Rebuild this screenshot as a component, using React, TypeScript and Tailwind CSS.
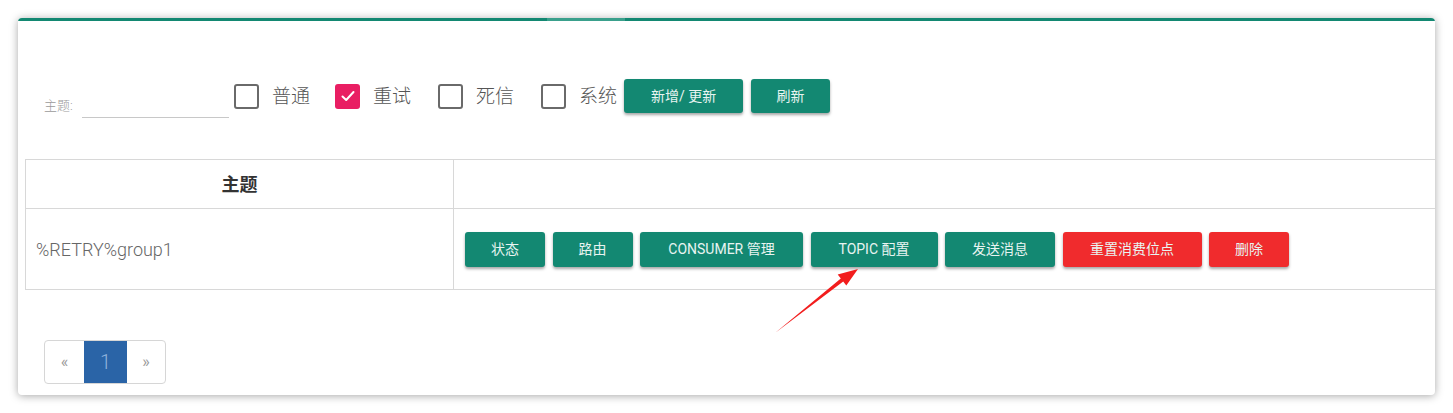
import React from "react";

const font = { fontFamily: '"Roboto", "Noto Sans CJK SC", sans-serif' };

function Check({ checked, label }: { checked?: boolean; label: string }) {
  return (
    <div className="flex items-center h-[24px] mt-[5px]">
      {checked ? (
        <div className="w-[25px] h-[25px] rounded-[3px] bg-[#e91e63] flex items-center justify-center">
          <svg width="16" height="16" viewBox="0 0 16 16">
            <path d="M2.5 8.5 L6.2 12 L13.5 4" stroke="white" strokeWidth="2" fill="none" strokeLinecap="round" strokeLinejoin="round" />
          </svg>
        </div>
      ) : (
        <div className="w-[25px] h-[25px] rounded-[3px] border-2 border-[#6a6a6a]" />
      )}
      <span className="ml-[13px] text-[19px] font-light text-[#555] leading-none">{label}</span>
    </div>
  );
}

function Btn({ children, w, red }: { children: React.ReactNode; w: string; red?: boolean }) {
  return (
    <div
      className={`${w} h-[35px] rounded-[3px] flex items-center justify-center text-[14px] text-[#e8f4f1] shadow-[0_2px_3px_rgba(0,0,0,0.35)] ${
        red ? "bg-[#f02b2d]" : "bg-[#138872]"
      }`}
    >
      {children}
    </div>
  );
}

export default function App() {
  return (
    <div className="w-[1453px] h-[413px] bg-white pt-[18px] pl-[18px] relative" style={font}>
      <div className="w-[1417px] h-[377px] bg-white rounded-[4px] overflow-hidden shadow-[0_1px_8px_rgba(0,0,0,0.35)] flex flex-col">
        <div className="flex h-[3px] shrink-0">
          <div className="w-[529px] bg-[#138872]" />
          <div className="w-[78px] bg-[#3aa08c]" />
          <div className="flex-1 bg-[#138872]" />
        </div>
        <div className="flex items-start pl-[26px] pt-[58px]">
          <div className="flex items-end h-[39px]">
            <span className="text-[13px] text-[#9a9a9a] font-light mb-[3px] w-[38px]">主题:</span>
            <div className="w-[147px] h-full border-b border-[#c8c8c8]" />
          </div>
          <div className="flex items-start ml-[5px]">
            <Check label="普通" />
            <div className="w-[25px]" />
            <Check checked label="重试" />
            <div className="w-[27px]" />
            <Check label="死信" />
            <div className="w-[27px]" />
            <Check label="系统" />
          </div>
          <div className="flex gap-[8px] ml-[7px]">
            <div className="w-[119px] h-[34px] rounded-[3px] bg-[#138872] flex items-center justify-center text-[14px] text-[#e8f4f1] shadow-[0_2px_3px_rgba(0,0,0,0.35)]">
              新增/ 更新
            </div>
            <div className="w-[79px] h-[34px] rounded-[3px] bg-[#138872] flex items-center justify-center text-[14px] text-[#e8f4f1] shadow-[0_2px_3px_rgba(0,0,0,0.35)]">
              刷新
            </div>
          </div>
        </div>
        <div className="ml-[7px] mt-[41px] w-[1420px] border border-[#d8d8d8]">
          <div className="flex h-[49px] border-b border-[#d8d8d8]">
            <div className="w-[428px] border-r border-[#d8d8d8] flex items-center justify-center text-[18px] font-bold text-[#333]">
              主题
            </div>
            <div className="flex-1" />
          </div>
          <div className="flex h-[80px]">
            <div className="w-[428px] border-r border-[#d8d8d8] flex items-center pl-[10px] text-[18px] font-light text-[#666]">
              %RETRY%group1
            </div>
            <div className="flex-1 flex items-center pl-[11px] gap-[7.5px]">
              <Btn w="w-[80px]">状态</Btn>
              <Btn w="w-[80px]">路由</Btn>
              <Btn w="w-[163px]">CONSUMER 管理</Btn>
              <Btn w="w-[127px]">TOPIC 配置</Btn>
              <Btn w="w-[110px]">发送消息</Btn>
              <Btn w="w-[139px]" red>重置消费位点</Btn>
              <Btn w="w-[80px]" red>删除</Btn>
            </div>
          </div>
        </div>
        <div className="ml-[26px] mt-[50px] flex h-[44px] w-[122px] border border-[#d6d6d6] rounded-[4px] overflow-hidden">
          <div className="w-[39px] flex items-center justify-center text-[16px] text-[#9a9a9a]">«</div>
          <div className="w-[43px] bg-[#2a64a7] flex items-center justify-center text-[20px] font-light text-[#8fb2dd]">1</div>
          <div className="flex-1 flex items-center justify-center text-[16px] text-[#9a9a9a]">»</div>
        </div>
      </div>
      <svg className="absolute left-0 top-0 pointer-events-none" width="1453" height="413">
        <polygon
          points="775,333 840.8,278.4 837.7,274.5 858,269 846.3,285.5 843.2,281.6"
          fill="#f21d1d"
        />
      </svg>
    </div>
  );
}
